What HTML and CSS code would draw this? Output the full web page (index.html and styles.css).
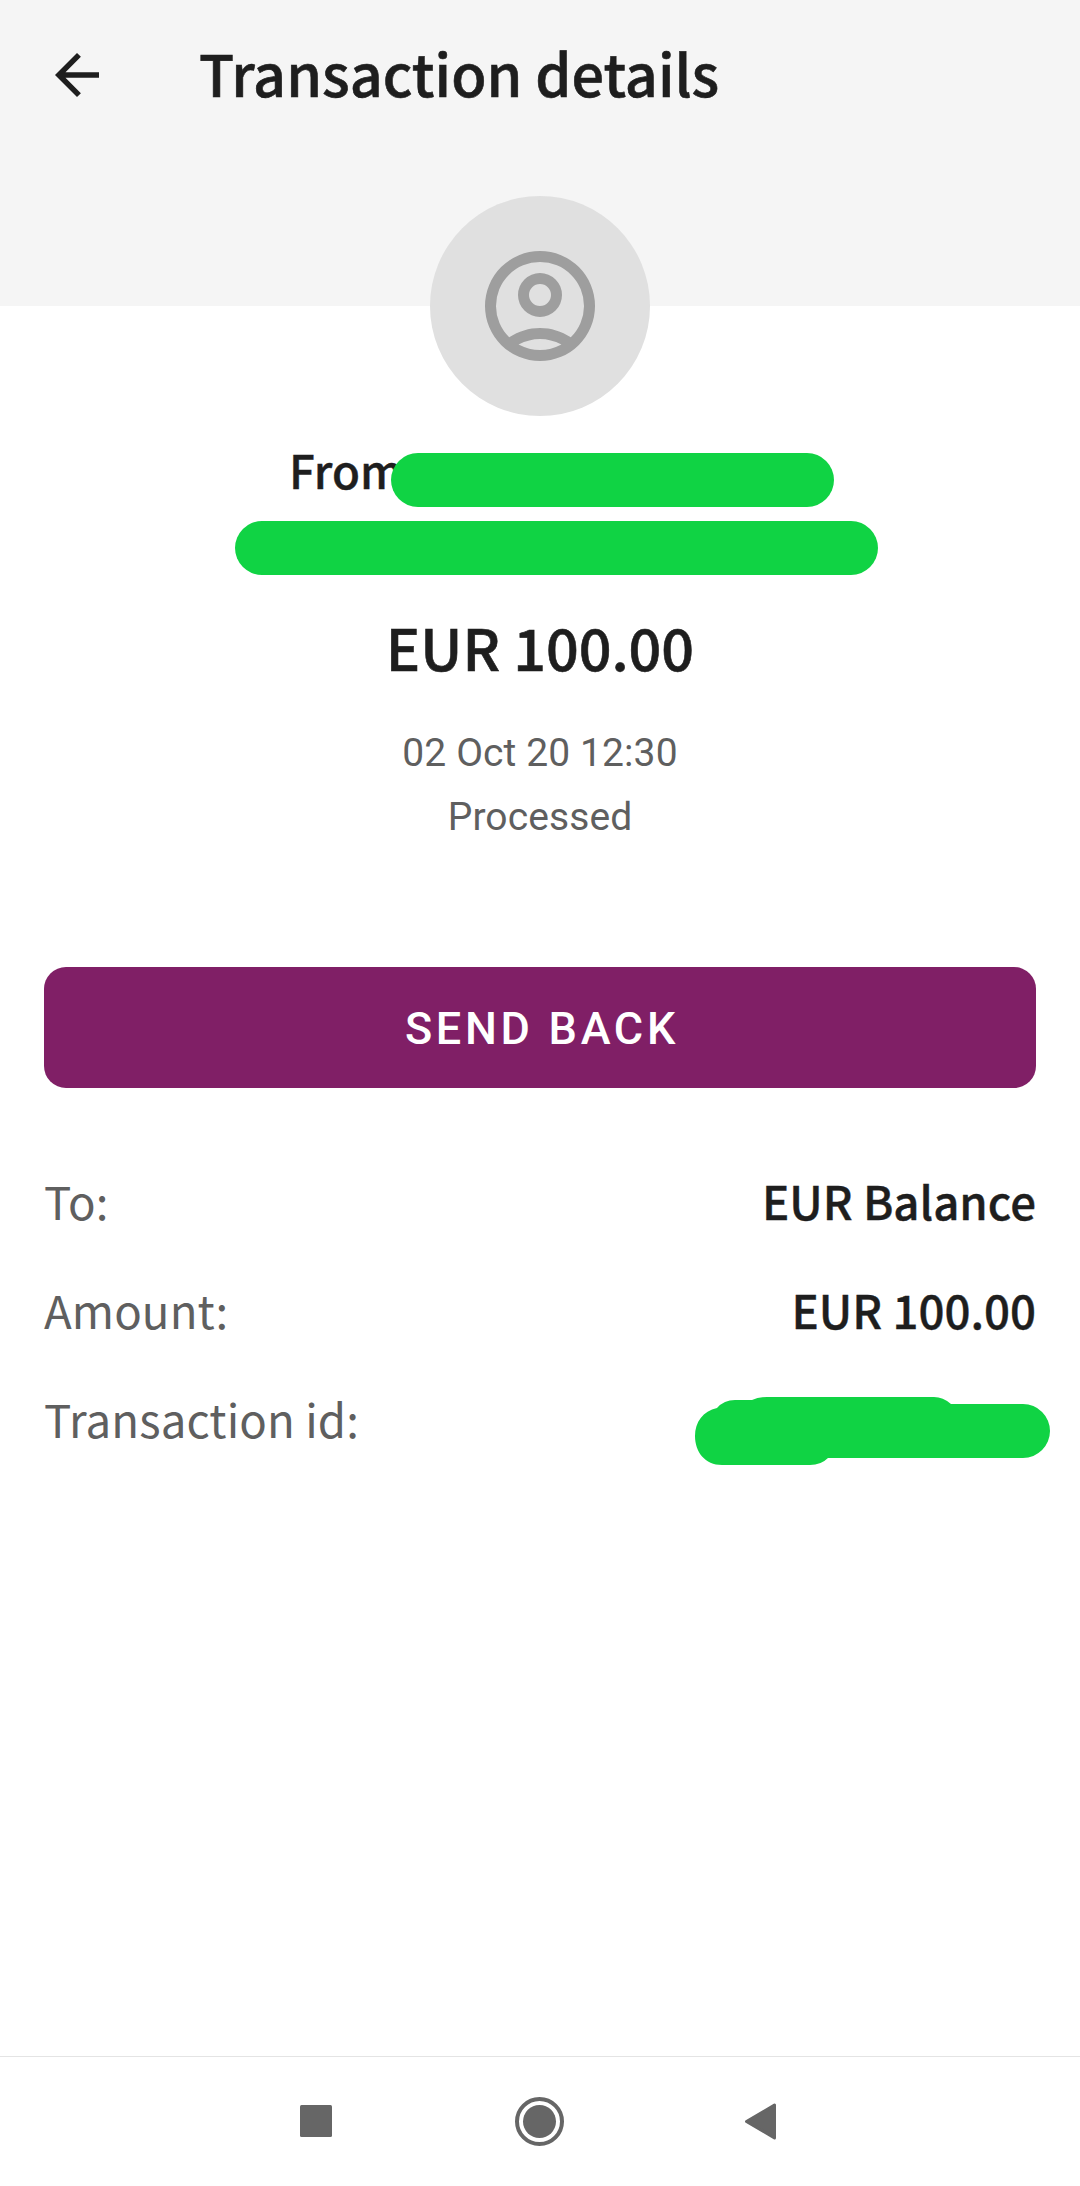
FILE: index.html
```html
<!DOCTYPE html>
<html lang="en">
<head>
<meta charset="utf-8">
<title>Transaction details</title>
<link rel="stylesheet" href="styles.css">
</head>
<body>
<div class="screen">
  <header class="header">
    <svg class="back" viewBox="0 0 44 44" width="44" height="44"><path d="M44 19.300H10.500L25.900 3.800 22 0 0 22l22 22 3.900-3.800L10.500 24.700H44z"/></svg>
    <h1 class="title">Transaction details</h1>
  </header>
  <main class="main">
    <div class="avatar">
      <svg viewBox="2 2 20 20" width="110" height="110"><path fill-rule="evenodd" d="M12 2a10 10 0 1 0 0 20 10 10 0 0 0 0-20zM8.100 19Q12 17 15.900 19Q12 21 8.100 19zM17.600 17.700C15.900 16.600 14 16 12 16s-3.900.6-5.600 1.700A8 8 0 1 1 17.600 17.700zM12 6a4 4 0 1 0 0 8 4 4 0 0 0 0-8zm0 2a2 2 0 1 1 0 4 2 2 0 0 1 0-4z"/></svg>
    </div>
    <div class="sender">
      <span class="from">From</span>
      <span class="mask mask-name"></span>
      <span class="mask mask-account"></span>
    </div>
    <div class="amount">EUR 100.00</div>
    <div class="meta">02 Oct 20 12:30</div>
    <div class="meta">Processed</div>
    <button class="send">SEND BACK</button>
    <dl class="details">
      <div class="row"><dt>To:</dt><dd>EUR Balance</dd></div>
      <div class="row"><dt>Amount:</dt><dd>EUR 100.00</dd></div>
      <div class="row"><dt>Transaction id:</dt><dd class="id"><svg class="scribble" viewBox="694 1396 357 70" width="357" height="70"><path d="M717 1408Q724 1400 735 1400H752Q758 1397 767 1397H934Q943 1397 951 1404H1023A27 27 0 0 1 1023 1458H828Q821 1465 810 1465H722C705 1465 695 1452 695 1436C695 1422 703 1411 717 1408Z"/></svg></dd></div>
    </dl>
  </main>
  <nav class="nav">
    <svg viewBox="0 0 1080 129" width="1080" height="129"><rect x="300" y="48" width="32" height="32" rx="1.500"/><circle cx="539.500" cy="64.500" r="16.500"/><circle class="ring" cx="539.500" cy="64.500" r="22.500"/><path class="triangle" d="M746.500 64.500L774.500 48V81Z"/></svg>
  </nav>
</div>
</body>
</html>
```
FILE: styles.css
```css
* { box-sizing: border-box; }
body { margin: 0; background: #fff; color: #1e1e1e; font-family: "Noto Sans CJK SC", sans-serif; }
.screen { width: 1080px; height: 2186px; display: flex; flex-direction: column; }
.header { height: 306px; background: #f5f5f5; display: flex; align-items: flex-start; padding: 53px 0 0 55px; }
.back { fill: #1e1e1e; }
.title { margin: -13px 0 0 100px; font-size: 57.5px; line-height: 64px; font-weight: 500; white-space: nowrap; }
.title, .amount { -webkit-text-stroke: 0.6px #1e1e1e; }
.main { flex: 1; display: flex; flex-direction: column; align-items: center; padding: 0 44px; }
.avatar { width: 220px; height: 220px; margin-top: -110px; border-radius: 50%; background: #e0e0e0; display: flex; align-items: center; justify-content: center; fill: #9e9e9e; }
.sender { position: relative; width: 992px; height: 175px; }
.from { position: absolute; left: 245px; top: 23px; font-size: 45.6px; line-height: 60px; font-weight: 500; }
.from, .row dd { -webkit-text-stroke: 0.4px #1e1e1e; }
.mask { position: absolute; height: 54px; border-radius: 27px; background: #10d344; }
.mask-name { left: 347px; top: 37px; width: 443px; }
.mask-account { left: 191px; top: 105px; width: 643px; }
.amount { margin-top: 13px; font-size: 57.5px; line-height: 84px; font-weight: 500; }
.meta { font: 400 39px/64px Roboto, sans-serif; color: #5f5f5f; letter-spacing: 0.1px; }
.amount + .meta { margin-top: 33px; }
.send { width: 992px; height: 121px; margin-top: 118px; padding: 3px 0 0 4px; border: 0; border-radius: 22px; background: #801f66; color: #fff; font: 500 45px/118px Roboto, sans-serif; letter-spacing: 3.7px; }
.details { width: 992px; margin: 58px 0 0; }
.row { display: flex; justify-content: space-between; height: 109px; line-height: 109px; font-size: 45.6px; }
.row dt { color: #5f5f5f; font-weight: 400; letter-spacing: 0.1px; }
.row dd { margin: 0; font-weight: 500; }
.row .id { position: relative; }
.scribble { position: absolute; right: -15px; top: 32px; fill: #10d344; }
.nav { height: 130px; border-top: 1px solid #e4e4e4; fill: #666; }
.nav svg { display: block; }
.ring { fill: none; stroke: #666; stroke-width: 4; }
.triangle { stroke: #666; stroke-width: 3; stroke-linejoin: round; }
```
